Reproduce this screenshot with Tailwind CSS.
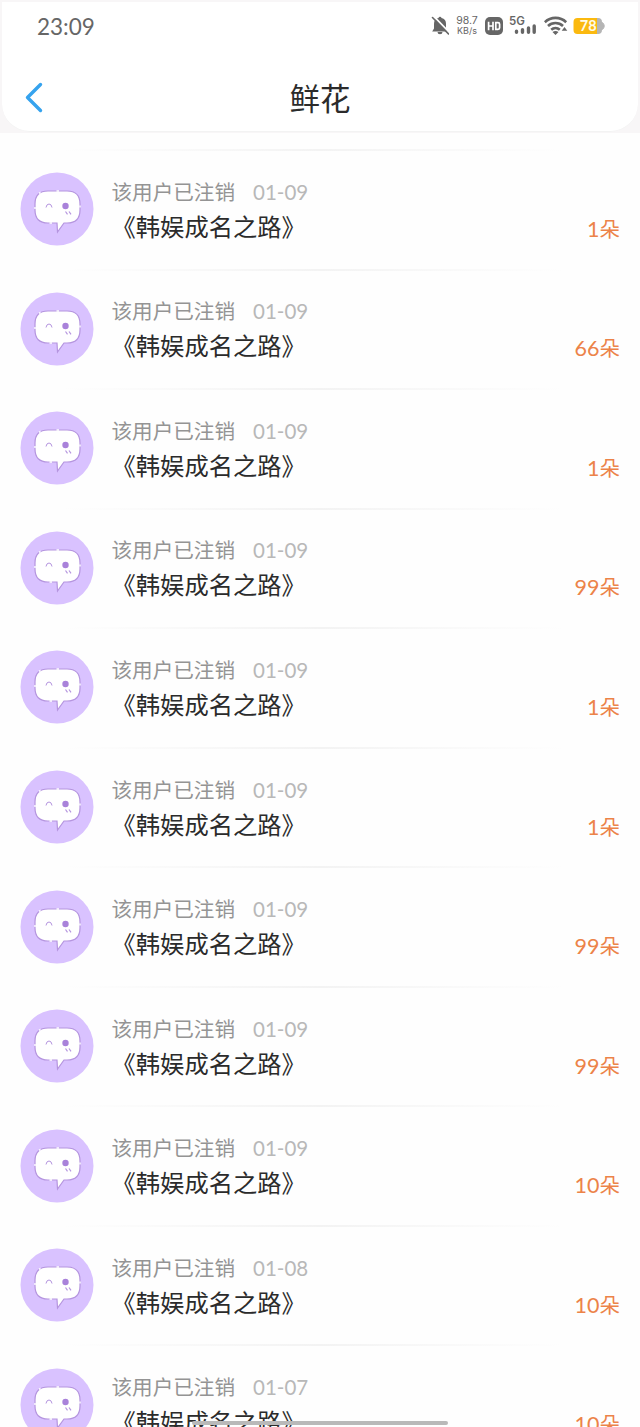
<!DOCTYPE html>
<html lang="zh-CN">
	<head>
		<meta charset="UTF-8" />
		<meta name="viewport" content="width=device-width, initial-scale=1.0" />
		<title>鲜花</title>
		<script src="https://cdn.jsdelivr.net/npm/@tailwindcss/browser@4"></script>
	</head>
	<body
		class="h-screen overflow-hidden bg-[#fefefe] font-['Lato','Noto_Sans_CJK_SC',sans-serif] text-[#2b2b2b]"
	>
		<!-- Header -->
		<header class="h-[133px] bg-[#f8f6f7] px-0.5 pt-0.5 pb-px">
			<div class="h-full rounded-b-[28px] border-b border-[#f3f3f3] bg-white">
				<!-- Status bar -->
				<div class="flex h-12 items-center justify-between pr-[33px] pl-[35px] text-[#666]">
					<span class="pt-0.5 text-[22.5px] leading-none">23:09</span>
					<div class="flex items-center">
						<svg class="mr-[7px] h-5 w-[18px]" viewBox="0 0 18 20">
							<path d="M9 .8a1.500 1.500 0 0 1 1.500 1.200A6 6 0 0 1 15 8v4.500l1.800 3H1.200l1.800-3V8a6 6 0 0 1 4.500-6A1.500 1.500 0 0 1 9 .8zM6.500 16h5a2.500 2.200 0 0 1-5 0z" fill="#666" />
							<path d="M2.500 0l16 16.500" stroke="#fff" stroke-width="1.800" />
							<path d="M1.500 1.500l16 16.500" stroke="#666" stroke-width="1.600" stroke-linecap="round" />
						</svg>
						<div class="mr-[7px] flex w-[22px] flex-col text-center font-['Inter',sans-serif] text-[10.5px] leading-[10px] whitespace-nowrap">
							<span>98.7</span>
							<span class="text-[9px]">KB/s</span>
						</div>
						<svg class="mr-[6px] h-[18px] w-[18px]" viewBox="0 0 18 18">
							<rect width="18" height="18" rx="5" fill="#666" />
							<path d="M3.600 4.800v8.400M8 4.800v8.400M3.600 9H8M10.800 5.600v6.800h2.200q1.600 0 1.600-1.600V7.200q0-1.600-1.600-1.600z" fill="none" stroke="#fff" stroke-width="1.700" />
						</svg>
						<svg class="mr-[8px] h-5 w-[27px] overflow-visible" viewBox="0 0 27 20">
							<text x="0" y="9" font-size="11.500" font-weight="600" font-family="Inter" fill="#666">5G</text>
							<g stroke="#666" stroke-width="3.400" stroke-linecap="round">
								<path d="M7.500 15.200v1.100M13.500 13.700v2.600M19.500 12v4.300M25.200 10v6.300" />
							</g>
						</svg>
						<svg class="mr-[5px] h-5 w-6" viewBox="0 0 24 20">
							<g fill="none" stroke="#666" stroke-width="2.600">
								<path d="M.8 6.200a15.500 15.500 0 0 1 21.400 0" />
								<path d="M4 10a11 11 0 0 1 15 0" />
								<path d="M7.200 13.700a6.500 6.500 0 0 1 8.600 0" />
							</g>
							<path d="M8.500 16q3-2 6 0l-3 3zM20.500 11l2.800 3.800h-5.600z" fill="#666" />
						</svg>
						<svg class="h-[18px] w-8" viewBox="0 0 32 18">
							<path d="M4 1h21a4 4 0 0 1 4 4v8a4 4 0 0 1-4 4H24V1z" fill="#b5b5b5" />
							<path d="M29.500 5.500q3.500 3.500 0 7z" fill="#b5b5b5" stroke="#b5b5b5" />
							<path d="M4.500 1H24v16H4.500A4 4 0 0 1 .5 13V5a4 4 0 0 1 4-4z" fill="#fbb90f" />
							<text x="6.800" y="14.200" font-size="14.500" font-weight="700" font-family="Lato" fill="#fffbe8">78</text>
						</svg>
					</div>
				</div>
				<!-- Title bar -->
				<div class="grid h-[94px] grid-cols-3 items-start pt-8">
					<svg class="ml-[22px] h-8 w-5" viewBox="0 0 20 32">
						<path d="M16.500 2.500L3.500 15.500l13 13" fill="none" stroke="#36a3ee" stroke-width="3.400" stroke-linecap="round" stroke-linejoin="round" />
					</svg>
					<h1 class="text-center text-[30.5px] leading-8">鲜花</h1>
				</div>
			</div>
		</header>

		<!-- Flower list -->
		<main id="list" class="pt-4"></main>

		<!-- Home indicator -->
		<div class="fixed bottom-0.5 left-1/2 h-1 w-64 -translate-x-1/2 rounded-full bg-[#b9b9b9]"></div>

		<script>
			const flowers = [
				["01-09", 1],
				["01-09", 66],
				["01-09", 1],
				["01-09", 99],
				["01-09", 1],
				["01-09", 1],
				["01-09", 99],
				["01-09", 99],
				["01-09", 10],
				["01-08", 10],
				["01-07", 10],
			];

			const row = ([date, count]) => `
				<div class="h-[119.55px]">
					<div class="h-[2px] bg-linear-to-r from-transparent from-10% via-[#f3f3f3] to-transparent to-88%"></div>
					<div class="flex pt-[21.3px] pr-5 pl-5">
						<svg class="h-[74px] w-[74px] shrink-0" viewBox="0 0 74 74">
							<circle cx="37" cy="37" r="36.500" fill="#d9c2ff" />
							<path d="M28 19h19q13 0 13 13v6q0 13-13 13h-3l-6.500 9-.5-9h-9Q15 51 15 38v-6q0-13 13-13z" fill="#fff" stroke="#b595df" stroke-width="1.200" />
							<path d="M19 21.300l1.500-1M36.500 19H39M15 35v2M29.500 51H32M60 33.500v2" stroke="#fff" stroke-width="1.400" />
							<path d="M26 35.500q.5-3.500 3-3.500t3 3.500" fill="none" stroke="#b595df" />
							<circle cx="45.500" cy="34" r="3.200" fill="#a982da" />
							<path d="M45.500 39.500l2 2.800M49 39.500l2 2.800" stroke="#b595df" stroke-width="1.200" />
						</svg>
						<div class="ml-[17.5px] flex-1 pt-[1.5px]">
							<div class="flex items-center text-[20.6px] leading-[36px]">
								<span class="text-[#949494]">该用户已注销</span>
								<span class="ml-[18px] text-[20.5px] text-[#b8b8b8]">${date}</span>
							</div>
							<div class="-mt-px text-[24.3px] leading-[36px]">《韩娱成名之路》</div>
						</div>
						<div class="mt-[38.5px] text-[20.5px] leading-[36px] text-[#ec8349]"><span class="text-[21.5px]">${count}</span>朵</div>
					</div>
				</div>`;

			document.getElementById("list").innerHTML = flowers.map(row).join("");
		</script>
	</body>
</html>
